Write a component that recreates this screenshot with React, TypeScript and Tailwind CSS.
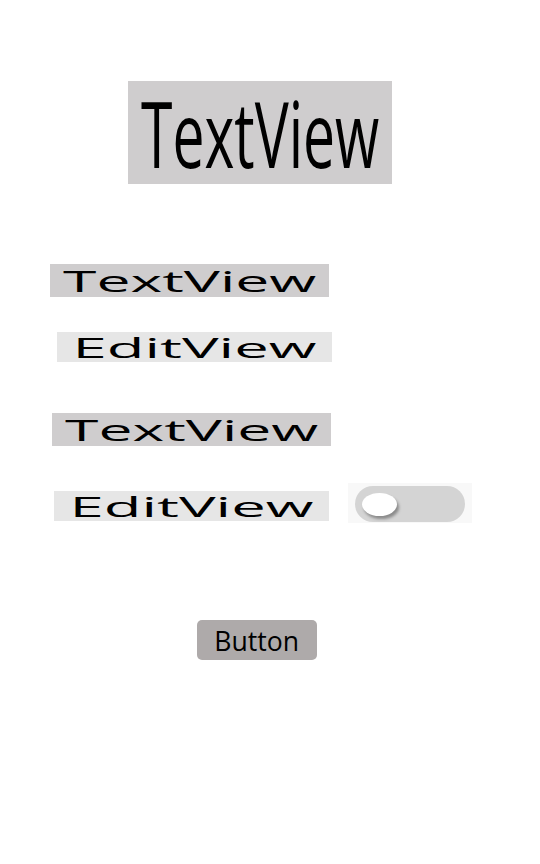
import React from "react";

function Label({ text, box, size, scale }: { text: string; box: string; size: string; scale: string }) {
  return (
    <div className={`flex items-center justify-center ${box}`}>
      <span className={`inline-block whitespace-nowrap leading-none text-black ${size} ${scale}`}>{text}</span>
    </div>
  );
}

function Toggle() {
  return (
    <div className="flex h-[40px] w-[124px] items-start bg-[#f8f8f8] px-[7px] pt-[3px]">
      <div className="flex h-[36px] w-full items-center rounded-full bg-[#d4d4d4] pl-[7px]">
        <div className="h-[23px] w-[35px] rounded-[50%] bg-white shadow-[2px_3px_3px_rgba(0,0,0,0.35)]" />
      </div>
    </div>
  );
}

export default function App() {
  return (
    <div className="h-[864px] w-[540px] overflow-hidden bg-white font-['Open_Sans',sans-serif]">
      <div className="pt-[81px] pl-[128px]">
        <Label text="TextView" box="h-[103px] w-[264px] bg-[#cfcdce]" size="text-[92px] font-medium" scale="scale-x-[0.62]" />
      </div>

      <div className="mt-[80px] pl-[50px]">
        <Label text="TextView" box="h-[33px] w-[279px] bg-[#cfcdce]" size="text-[30px] font-medium" scale="scale-x-[2.02]" />
      </div>

      <div className="mt-[35px] pl-[57px]">
        <Label text="EditView" box="h-[30px] w-[275px] bg-[#e6e6e6]" size="text-[27px] font-medium" scale="scale-x-[2.28]" />
      </div>

      <div className="mt-[51px] pl-[52px]">
        <Label text="TextView" box="h-[33px] w-[279px] bg-[#cfcdce]" size="text-[30px] font-medium" scale="scale-x-[2.02]" />
      </div>

      <div className="mt-[37px] flex items-start pl-[54px]">
        <div className="mt-[8px]">
          <Label text="EditView" box="h-[30px] w-[275px] bg-[#e6e6e6]" size="text-[27px] font-medium" scale="scale-x-[2.28]" />
        </div>
        <div className="ml-[19px]">
          <Toggle />
        </div>
      </div>

      <div className="mt-[97px] pl-[197px]">
        <button type="button" className="flex h-[40px] w-[120px] items-center justify-center rounded-[5px] bg-[#aeaaaa] text-[28px] leading-none text-black">
          <span className="inline-block scale-x-[0.95]">Button</span>
        </button>
      </div>
    </div>
  );
}
